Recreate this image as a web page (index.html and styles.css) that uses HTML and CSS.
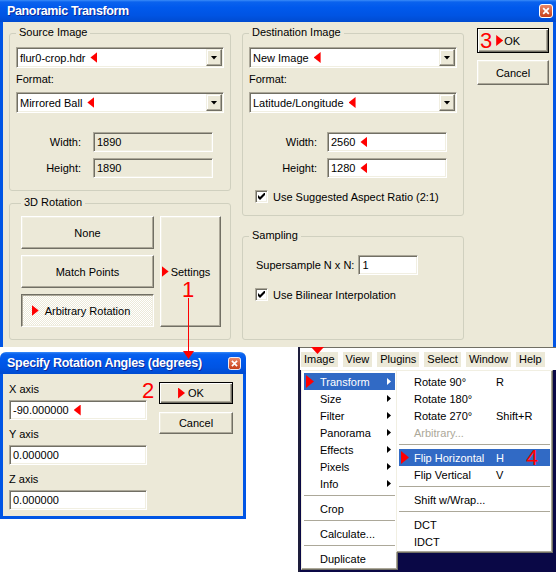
FILE: index.html
```html
<!DOCTYPE html>
<html>
<head>
<meta charset="utf-8">
<link rel="stylesheet" href="styles.css">
</head>
<body>
<div class="page">
  <div class="main">
    <div class="caption">
      <span class="caption-text">Panoramic Transform</span>
      <span class="xbtn"><svg width="14" height="14" viewBox="0 0 14 14"><defs><linearGradient id="xg" x1="0" y1="0" x2="0" y2="1"><stop offset="0" stop-color="#EC8A6A"/><stop offset="1" stop-color="#C43C16"/></linearGradient></defs><rect x="0.5" y="0.5" width="13" height="13" rx="2.5" fill="url(#xg)" stroke="#fff"/><path d="M4.2 4.2L9.8 9.8M9.8 4.2L4.2 9.8" stroke="#fff" stroke-width="1.8"/></svg></span>
    </div>
    <div class="main-body">
      <div class="col">
        <div class="group g-src">
          <div class="glabel">Source Image</div>
          <div class="combo first"><span class="ctext">flur0-crop.hdr<i class="tri-l"></i></span><span class="dd"><i class="tri-d"></i></span></div>
          <div class="lbl fmt">Format:</div>
          <div class="combo second"><span class="ctext">Mirrored Ball<i class="tri-l"></i></span><span class="dd"><i class="tri-d"></i></span></div>
          <div class="frow first"><span class="flabel">Width:</span><span class="field disabled">1890</span></div>
          <div class="frow"><span class="flabel">Height:</span><span class="field disabled">1890</span></div>
        </div>
        <div class="group g-rot">
          <div class="glabel">3D Rotation</div>
          <div class="rot-grid">
            <div class="rot-left">
              <div class="btn rbtn">None</div>
              <div class="btn rbtn">Match Points</div>
              <div class="btn rbtn pressed"><i class="tri-r hang-arb"></i>Arbitrary Rotation</div>
            </div>
            <div class="btn settings"><i class="tri-r hang-set"></i>Settings</div>
          </div>
        </div>
      </div>
      <div class="col">
        <div class="group g-dst">
          <div class="glabel">Destination Image</div>
          <div class="combo first"><span class="ctext">New Image<i class="tri-l"></i></span><span class="dd"><i class="tri-d"></i></span></div>
          <div class="lbl fmt">Format:</div>
          <div class="combo second"><span class="ctext">Latitude/Longitude<i class="tri-l"></i></span><span class="dd"><i class="tri-d"></i></span></div>
          <div class="frow first"><span class="flabel">Width:</span><span class="field">2560<i class="tri-l"></i></span></div>
          <div class="frow"><span class="flabel">Height:</span><span class="field">1280<i class="tri-l"></i></span></div>
          <div class="chkrow"><span class="chk"><svg width="7" height="7" viewBox="0 0 7 7"><polygon points="0,2 2,4 7,-1 7,2 2,7 0,5" fill="#000"/></svg></span><span>Use Suggested Aspect Ratio (2:1)</span></div>
        </div>
        <div class="group g-smp">
          <div class="glabel">Sampling</div>
          <div class="srow"><span>Supersample N x N:</span><span class="field small">1</span></div>
          <div class="chkrow"><span class="chk"><svg width="7" height="7" viewBox="0 0 7 7"><polygon points="0,2 2,4 7,-1 7,2 2,7 0,5" fill="#000"/></svg></span><span>Use Bilinear Interpolation</span></div>
        </div>
      </div>
      <div class="col col-btn">
        <div class="btn default okmain"><span class="hang3"><span class="num">3</span><i class="tri-r"></i></span>OK</div>
        <div class="btn cbtn">Cancel</div>
      </div>
    </div>
  </div>

  <div class="lower">
    <div class="dlg2">
      <div class="caption c2">
        <span class="caption-text">Specify Rotation Angles (degrees)</span>
        <span class="xbtn"><svg width="13" height="13" viewBox="0 0 14 14"><rect x="0.5" y="0.5" width="13" height="13" rx="2.5" fill="url(#xg)" stroke="#fff"/><path d="M4.2 4.2L9.8 9.8M9.8 4.2L4.2 9.8" stroke="#fff" stroke-width="1.8"/></svg></span>
      </div>
      <div class="dlg2-body">
        <div class="axes">
          <div class="lbl">X axis</div>
          <div class="field wide">-90.000000<i class="tri-l"></i></div>
          <div class="lbl">Y axis</div>
          <div class="field wide">0.000000</div>
          <div class="lbl">Z axis</div>
          <div class="field wide">0.000000</div>
        </div>
        <div class="dlg2-btns">
          <div class="btn default ok2"><i class="tri-r hang-ok"></i>OK</div>
          <div class="btn">Cancel</div>
        </div>
      </div>
    </div>

    <div class="menuarea">
      <div class="menubar">
        <span class="mi">Image</span><span class="mi">View</span><span class="mi">Plugins</span><span class="mi">Select</span><span class="mi">Window</span><span class="mi">Help</span>
      </div>
      <div class="menus">
        <div class="menu dropdown">
          <div class="item hl"><i class="tri-big"></i><span class="itext">Transform</span><i class="sub"></i></div>
          <div class="item"><span class="itext">Size</span><i class="sub"></i></div>
          <div class="item"><span class="itext">Filter</span><i class="sub"></i></div>
          <div class="item"><span class="itext">Panorama</span><i class="sub"></i></div>
          <div class="item"><span class="itext">Effects</span><i class="sub"></i></div>
          <div class="item"><span class="itext">Pixels</span><i class="sub"></i></div>
          <div class="item"><span class="itext">Info</span><i class="sub"></i></div>
          <div class="sep"></div>
          <div class="item"><span class="itext">Crop</span></div>
          <div class="sep"></div>
          <div class="item"><span class="itext">Calculate...</span></div>
          <div class="sep"></div>
          <div class="item"><span class="itext">Duplicate</span></div>
        </div>
        <div class="menu submenu">
          <div class="item"><span class="itext">Rotate 90°</span><span class="key">R</span></div>
          <div class="item"><span class="itext">Rotate 180°</span><span class="key"></span></div>
          <div class="item"><span class="itext">Rotate 270°</span><span class="key">Shift+R</span></div>
          <div class="item disabled"><span class="itext">Arbitrary...</span><span class="key"></span></div>
          <div class="sep"></div>
          <div class="item hl"><i class="tri-big"></i><span class="itext">Flip Horizontal</span><span class="key">H</span><span class="num n4">4</span></div>
          <div class="item"><span class="itext">Flip Vertical</span><span class="key">V</span></div>
          <div class="sep"></div>
          <div class="item"><span class="itext">Shift w/Wrap...</span></div>
          <div class="sep"></div>
          <div class="item"><span class="itext">DCT</span></div>
          <div class="item"><span class="itext">IDCT</span></div>
        </div>
      </div>
    </div>
  </div>

  <div class="annot a1"><span class="num">1</span><span class="vline"></span><span class="ahead"></span></div>
  <div class="annot a2"><span class="num">2</span></div>
  <div class="annot a-menu"><span class="ahead"></span></div>
</div>
</body>
</html>
```

FILE: styles.css
```css
* { box-sizing: border-box; margin: 0; padding: 0; }
html, body { margin: 0; background: #fff; }
body {
  font-family: "Liberation Sans", Arial, sans-serif;
  font-size: 11px;
  color: #000;
}
i { font-style: normal; }
.page { position: relative; width: 556px; height: 572px; overflow: hidden; background: #fff; }

/* windows */
.main { height: 347px; display: flex; flex-direction: column; background: #ECE9D8; }
.caption {
  height: 22px; flex: none;
  display: flex; align-items: center;
  padding: 0 3px 0 7px;
  color: #fff; font-weight: bold;
  background: linear-gradient(#3A8CF8 0, #0A62EE 2px, #0059EC 35%, #0054E3 70%, #004BD0 100%);
}
.caption-text { flex: 1; font-size: 12.5px; letter-spacing: -0.35px; text-shadow: 1px 1px #0B2A9C; white-space: nowrap; }
.xbtn { display: flex; }
.main-body {
  flex: 1;
  display: flex;
  border-left: 3px solid #0055E5;
  border-right: 3px solid #0055E5;
  padding: 0 4px 0 6px;
}
.col { width: 222px; display: flex; flex-direction: column; padding: 11px 0 7px; }
.col + .col { margin-left: 11px; }
.col-btn { width: 72px; margin-left: 13px !important; padding-top: 6px; }

/* group boxes */
.group { border: 1px solid #D0D0BF; border-radius: 3px; padding: 0 6px 12px; display: flex; flex-direction: column; }
.glabel { align-self: flex-start; margin-top: -8px; height: 13px; line-height: 13px; padding: 0 3px; background: #ECE9D8; }
.g-rot { margin-top: 12px; flex: 1; padding: 0 9px 12px 11px; }
.g-smp { margin-top: 20px; flex: 1; }

.lbl { height: 13px; line-height: 13px; }
.fmt { margin-top: 5px; }

/* sunken fields */
.combo, .field {
  display: flex; align-items: center;
  background: #fff;
  border: 1px solid; border-color: #ACA899 #fff #fff #ACA899;
  box-shadow: inset 1px 1px #716F64, inset -1px -1px #F1EFE2;
  white-space: nowrap;
}
.combo { height: 21px; padding: 0 1px 0 3px; }
.combo.first { margin-top: 8px; }
.combo.second { margin-top: 6px; }
.ctext { flex: 1; display: flex; align-items: center; }
.dd {
  width: 16px; height: 17px;
  display: flex; align-items: center; justify-content: center;
  background: #ECE9D8;
  border: 1px solid; border-color: #F1EFE2 #716F64 #716F64 #F1EFE2;
  box-shadow: inset -1px -1px #ACA899, inset 1px 1px #fff;
}
.tri-d { width: 7px; height: 4px; background: #000; clip-path: polygon(0 0, 100% 0, 50% 100%); }
.tri-l { display: inline-block; width: 7px; height: 11px; margin-left: 5px; background: #f00; clip-path: polygon(100% 0, 0 50%, 100% 100%); }
.tri-r { display: inline-block; width: 7px; height: 11px; background: #f00; clip-path: polygon(0 0, 100% 50%, 0 100%); }

.frow { display: flex; align-items: center; height: 20px; margin-top: 6px; }
.frow.first { margin-top: 19px; }
.flabel { width: 65px; margin-right: 12px; text-align: right; }
.g-dst .flabel { width: 68px; margin-right: 10px; }
.field { height: 20px; width: 120px; padding: 0 3px; }
.field.disabled { background: #ECE9D8; }
.field.small { width: 60px; }
.field.wide { width: 138px; }

.chkrow { display: flex; align-items: center; height: 13px; margin-top: 12px; padding-left: 6px; }
.chk {
  width: 13px; height: 13px; margin-right: 5px;
  display: flex; align-items: center; justify-content: center;
  background: #fff;
  border: 1px solid; border-color: #ACA899 #fff #fff #ACA899;
  box-shadow: inset 1px 1px #716F64, inset -1px -1px #F1EFE2;
}
.srow { display: flex; align-items: center; height: 20px; margin-top: 13px; padding-left: 7px; gap: 4px; }
.g-smp .chkrow { margin-top: 13px; }

/* buttons */
.btn {
  display: flex; align-items: center; justify-content: center;
  background: #ECE9D8;
  border: 1px solid; border-color: #fff #716F64 #716F64 #fff;
  box-shadow: inset -1px -1px #ACA899, inset 1px 1px #F1EFE2;
  white-space: nowrap;
}
.btn.default { border-color: #000; box-shadow: inset 1px 1px #fff, inset -1px -1px #716F64, inset -2px -2px #ACA899; }
.btn.pressed {
  border-color: #716F64 #fff #fff #716F64;
  box-shadow: inset 1px 1px #ACA899, inset -1px -1px #F1EFE2;
  background: repeating-conic-gradient(#fff 0 25%, #ECE9D8 0 50%) 0 0 / 2px 2px;
}
.rot-grid { display: flex; margin-top: 7px; gap: 6px; }
.rot-left { width: 133px; display: flex; flex-direction: column; gap: 6px; }
.rbtn { height: 33px; }
.settings { width: 61px; height: 111px; }
.hang-arb { margin-left: -13px; margin-right: 6px; }
.hang-set { margin-left: -9px; margin-right: 2px; }
.hang-ok { margin-left: -10px; margin-right: 3px; }

.okmain { height: 25px; }
.cbtn { height: 25px; margin-top: 7px; }
.hang3 { display: flex; align-items: center; margin-left: -26px; margin-right: 1px; }
.hang3 .num { margin-right: 4px; }

.num { color: #f00; font-size: 22px; line-height: 16px; font-family: "Liberation Sans", Arial, sans-serif; }

/* lower area */
.lower { display: flex; height: 225px; }
.dlg2 { width: 246px; height: 167px; margin-top: 5px; display: flex; flex-direction: column; background: #ECE9D8; border-radius: 6px 6px 0 0; overflow: hidden; }
.c2 { padding: 0 5px 0 7px; }
.c2 .caption-text { font-size: 12.5px; letter-spacing: -0.25px; }
.dlg2-body {
  flex: 1; display: flex;
  border: 3px solid #0055E5; border-top: 0;
  padding: 9px 10px 0 6px;
  gap: 12px;
}
.axes { width: 138px; display: flex; flex-direction: column; }
.axes .lbl { margin-bottom: 4px; padding-left: 0; }
.axes .field + .lbl { margin-top: 8px; }
.dlg2-btns { width: 74px; display: flex; flex-direction: column; gap: 8px; margin-top: -1px; }
.dlg2-btns .btn { height: 22px; }

/* menus */
.menuarea { margin-left: 52px; width: 258px; display: flex; flex-direction: column; border-left: 2px solid #1E1E3C; }
.menubar { height: 23px; display: flex; align-items: center; background: #fff; padding-left: 1px; gap: 5px; border-top: 1px solid #716F64; }
.mi { background: #ECE9D8; height: 15px; line-height: 15px; padding: 0 3px; }
.menus { flex: 1; display: flex; align-items: flex-start; background: #0A0846; padding-left: 1px; }
.menu {
  background: #fff;
  border: 1px solid; border-color: #F1EFE2 #716F64 #716F64 #F1EFE2;
  box-shadow: inset -1px -1px #ACA899, inset 1px 1px #fff;
  padding: 2px 2px;
}
.dropdown { width: 97px; height: 200px; }
.submenu { width: 157px; height: 183px; margin-left: -2px; position: relative; }
.item { height: 17px; display: flex; align-items: center; position: relative; white-space: nowrap; }
.dropdown .item { padding-left: 16px; padding-right: 4px; }
.submenu .item { padding-left: 15px; }
.itext { flex: 1; }
.submenu .itext { flex: none; width: 82px; }
.key { width: 30px; }
.item.hl { background: #316AC5; color: #fff; }
.item.disabled { color: #ACA899; }
.sub { width: 4px; height: 7px; background: #000; clip-path: polygon(0 0, 100% 50%, 0 100%); }
.item.hl .sub { background: #fff; }
.tri-big { position: absolute; left: 2px; top: 2px; width: 8px; height: 13px; background: #f00; clip-path: polygon(0 0, 100% 50%, 0 100%); }
.sep { height: 8px; border-top: 3px solid transparent; }
.sep::before { content: ""; display: block; height: 1px; background: #ACA899; border-bottom: 1px solid #fff; box-sizing: content-box; }
.n4 { margin-left: 0; }

/* annotations */
.annot { position: absolute; }
.a1 { left: 182px; top: 282px; width: 12px; height: 80px; }
.a1 .num { position: absolute; left: 0; top: 0; }
.vline { position: absolute; left: 6px; top: 16px; width: 1px; height: 56px; background: #f00; }
.ahead { position: absolute; width: 11px; height: 8px; background: #f00; clip-path: polygon(0 0, 100% 0, 50% 100%); }
.a1 .ahead { left: 1px; top: 69px; }
.a2 { left: 142px; top: 383px; }
.a-menu { left: 311px; top: 347px; }
.a-menu .ahead { width: 13px; height: 7px; left: 0; top: 0; }
```
